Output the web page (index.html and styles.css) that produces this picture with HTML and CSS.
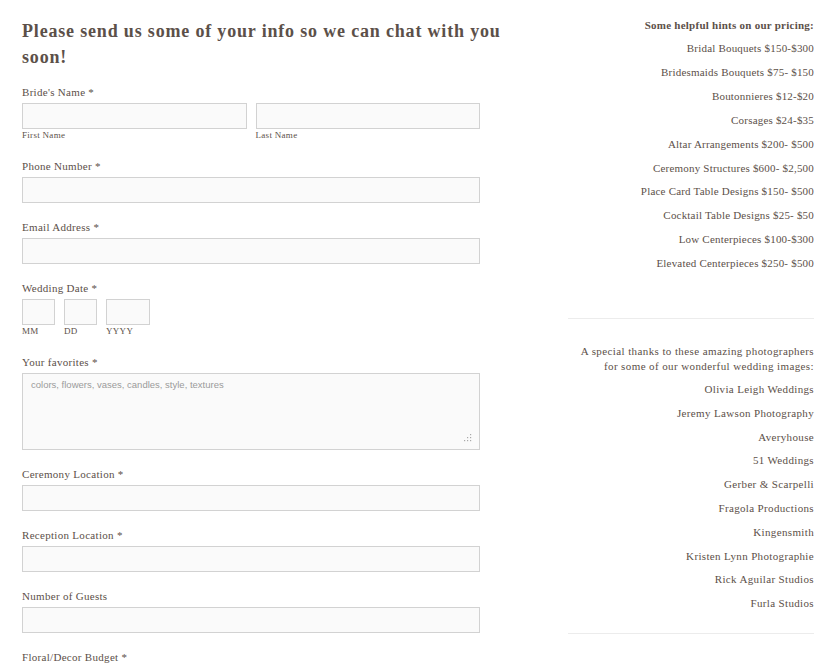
FILE: index.html
```html
<!DOCTYPE html>
<html lang="en">
<head>
    <meta charset="UTF-8">
    <title>Contact</title>
    <link rel="stylesheet" href="styles.css">
</head>
<body>
    <div class="page">
        <form class="form-col">
            <h1>Please send us some of your info so we can chat with you soon!</h1>

            <div class="field">
                <label>Bride's Name *</label>
                <div class="name-row">
                    <div class="sub">
                        <input type="text">
                        <span class="hint">First Name</span>
                    </div>
                    <div class="sub">
                        <input type="text">
                        <span class="hint">Last Name</span>
                    </div>
                </div>
            </div>

            <div class="field">
                <label>Phone Number *</label>
                <input type="text">
            </div>

            <div class="field">
                <label>Email Address *</label>
                <input type="text">
            </div>

            <div class="field">
                <label>Wedding Date *</label>
                <div class="date-row">
                    <div class="sub">
                        <input type="text" class="mm">
                        <span class="hint">MM</span>
                    </div>
                    <div class="sub">
                        <input type="text" class="dd">
                        <span class="hint">DD</span>
                    </div>
                    <div class="sub">
                        <input type="text" class="yyyy">
                        <span class="hint">YYYY</span>
                    </div>
                </div>
            </div>

            <div class="field">
                <label>Your favorites *</label>
                <div class="area-wrap">
                    <textarea placeholder="colors, flowers, vases, candles, style, textures"></textarea>
                    <!-- resize grip -->
                    <svg class="grip" width="8" height="8" viewBox="0 0 8 8">
                        <g fill="#a9a9a9">
                            <rect x="6" y="0" width="1.2" height="1.2"/>
                            <rect x="3" y="3" width="1.2" height="1.2"/>
                            <rect x="6" y="3" width="1.2" height="1.2"/>
                            <rect x="0" y="6" width="1.2" height="1.2"/>
                            <rect x="3" y="6" width="1.2" height="1.2"/>
                            <rect x="6" y="6" width="1.2" height="1.2"/>
                        </g>
                    </svg>
                </div>
            </div>

            <div class="field">
                <label>Ceremony Location *</label>
                <input type="text">
            </div>

            <div class="field">
                <label>Reception Location *</label>
                <input type="text">
            </div>

            <div class="field">
                <label>Number of Guests</label>
                <input type="text">
            </div>

            <div class="field">
                <label>Floral/Decor Budget *</label>
            </div>
        </form>

        <aside class="sidebar">
            <div class="pricing">
                <h3>Some helpful hints on our pricing:</h3>
                <p>Bridal Bouquets $150-$300</p>
                <p>Bridesmaids Bouquets $75- $150</p>
                <p>Boutonnieres $12-$20</p>
                <p>Corsages $24-$35</p>
                <p>Altar Arrangements $200- $500</p>
                <p>Ceremony Structures $600- $2,500</p>
                <p>Place Card Table Designs $150- $500</p>
                <p>Cocktail Table Designs $25- $50</p>
                <p>Low Centerpieces $100-$300</p>
                <p>Elevated Centerpieces $250- $500</p>
            </div>
            <hr class="sep-top">
            <div class="thanks">
                <p class="intro">A special thanks to these amazing photographers<br>for some of our wonderful wedding images:</p>
                <p>Olivia Leigh Weddings</p>
                <p>Jeremy Lawson Photography</p>
                <p>Averyhouse</p>
                <p>51 Weddings</p>
                <p>Gerber &amp; Scarpelli</p>
                <p>Fragola Productions</p>
                <p>Kingensmith</p>
                <p>Kristen Lynn Photographie</p>
                <p>Rick Aguilar Studios</p>
                <p>Furla Studios</p>
            </div>
            <hr class="sep-bottom">
        </aside>
    </div>
</body>
</html>
```

FILE: styles.css
```css
body {
    margin: 0;
    background: #fff;
    color: #5c5049;
    font-family: "Liberation Serif", "DejaVu Serif", serif;
}
.page {
    display: flex;
    padding: 0 16px 0 22px;
}
.form-col {
    width: 458px;
}
h1 {
    margin: 18px -50px 15px 0;
    font-size: 18px;
    line-height: 26px;
    letter-spacing: 0.82px;
    font-weight: bold;
}
.field {
    margin-bottom: 17px;
}
label {
    display: block;
    font-size: 11px;
    line-height: 14px;
    letter-spacing: 0.3px;
    margin-bottom: 4px;
}
input, textarea {
    display: block;
    box-sizing: border-box;
    width: 100%;
    height: 26px;
    margin: 0;
    border: 1px solid #d2d2d2;
    background: #fafafa;
}
.area-wrap {
    position: relative;
}
textarea {
    height: 77px;
    padding: 5px 8px;
    resize: none;
    font-family: "Liberation Sans", Arial, sans-serif;
    font-size: 9.5px;
}
textarea::placeholder {
    color: #9a9a9a;
}
.grip {
    position: absolute;
    right: 8px;
    bottom: 8px;
}
.name-row {
    display: flex;
    gap: 9px;
}
.name-row .sub {
    flex: 1;
}
.date-row {
    display: flex;
    gap: 9px;
}
.date-row .mm, .date-row .dd {
    width: 33px;
}
.date-row .yyyy {
    width: 44px;
}
.hint {
    display: block;
    font-size: 9px;
    line-height: 12px;
    letter-spacing: 0.3px;
    margin-bottom: 1px;
}
.sidebar {
    width: 246px;
    margin-left: auto;
    text-align: right;
    font-size: 11px;
    letter-spacing: 0.2px;
}
.sidebar p, .sidebar h3 {
    margin: 0;
    line-height: 23.9px;
}
.pricing {
    padding-top: 13px;
}
.sidebar h3 {
    font-size: 11px;
    font-weight: bold;
    line-height: 24px;
    letter-spacing: 0.25px;
}
hr {
    border: 0;
    border-top: 1px solid #ececec;
}
.sep-top {
    margin: 42px 0 25px;
}
.sep-bottom {
    margin: 17px 0 0;
}
.thanks p {
    line-height: 23.8px;
    letter-spacing: 0.35px;
}
.thanks .intro {
    line-height: 15px;
    margin-bottom: 4px;
    letter-spacing: 0.4px;
}
```
